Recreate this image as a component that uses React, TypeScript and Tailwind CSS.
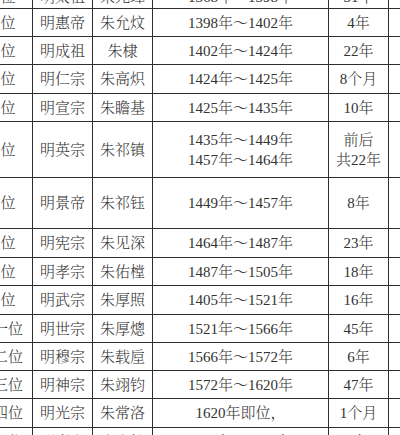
import React from "react";

type Row = {
  no: string;
  title: string;
  name: string;
  years: string[];
  reign: string[];
  h: number;
};

const rows: Row[] = [
  { no: "第一位", title: "明太祖", name: "朱元璋", years: ["1368年～1398年"], reign: ["31年"], h: 24 },
  { no: "第二位", title: "明惠帝", name: "朱允炆", years: ["1398年～1402年"], reign: ["4年"], h: 28 },
  { no: "第三位", title: "明成祖", name: "朱棣", years: ["1402年～1424年"], reign: ["22年"], h: 28 },
  { no: "第四位", title: "明仁宗", name: "朱高炽", years: ["1424年～1425年"], reign: ["8个月"], h: 29 },
  { no: "第五位", title: "明宣宗", name: "朱瞻基", years: ["1425年～1435年"], reign: ["10年"], h: 28 },
  { no: "第六位", title: "明英宗", name: "朱祁镇", years: ["1435年～1449年", "1457年～1464年"], reign: ["前后", "共22年"], h: 56 },
  { no: "第七位", title: "明景帝", name: "朱祁钰", years: ["1449年～1457年"], reign: ["8年"], h: 51 },
  { no: "第八位", title: "明宪宗", name: "朱见深", years: ["1464年～1487年"], reign: ["23年"], h: 29 },
  { no: "第九位", title: "明孝宗", name: "朱佑樘", years: ["1487年～1505年"], reign: ["18年"], h: 28 },
  { no: "第十位", title: "明武宗", name: "朱厚照", years: ["1405年～1521年"], reign: ["16年"], h: 29 },
  { no: "第十一位", title: "明世宗", name: "朱厚熜", years: ["1521年～1566年"], reign: ["45年"], h: 28 },
  { no: "第十二位", title: "明穆宗", name: "朱载垕", years: ["1566年～1572年"], reign: ["6年"], h: 28 },
  { no: "第十三位", title: "明神宗", name: "朱翊钧", years: ["1572年～1620年"], reign: ["47年"], h: 28 },
  { no: "第十四位", title: "明光宗", name: "朱常洛", years: ["1620年即位，"], reign: ["1个月"], h: 29 },
  { no: "第十五位", title: "明熹宗", name: "朱由校", years: ["1620年～1627年"], reign: ["7年"], h: 28 },
];

const cell = "border border-[#2e2e2e] text-center align-middle p-0 leading-[20px]";

export default function App() {
  return (
    <div className="w-[400px] h-[435px] overflow-hidden bg-white">
      <table
        className="table-fixed w-[495px] border-collapse ml-[-47px] mt-[-16px] text-[15px] text-[#333] font-light"
        style={{ fontFamily: '"Liberation Serif", "Noto Serif CJK SC", "Noto Sans CJK SC", serif' }}
      >
        <colgroup>
          <col className="w-[79px]" />
          <col className="w-[60px]" />
          <col className="w-[60px]" />
          <col className="w-[176px]" />
          <col className="w-[60px]" />
          <col className="w-[60px]" />
        </colgroup>
        <tbody>
          {rows.map((r) => (
            <tr key={r.no} style={{ height: r.h }}>
              <td className={cell}>{r.no}</td>
              <td className={cell}>{r.title}</td>
              <td className={cell}>{r.name}</td>
              <td className={cell}>
                {r.years.map((y) => (
                  <div key={y}>{y}</div>
                ))}
              </td>
              <td className={cell}>
                {r.reign.map((y) => (
                  <div key={y}>{y}</div>
                ))}
              </td>
              <td className={cell}></td>
            </tr>
          ))}
        </tbody>
      </table>
    </div>
  );
}
